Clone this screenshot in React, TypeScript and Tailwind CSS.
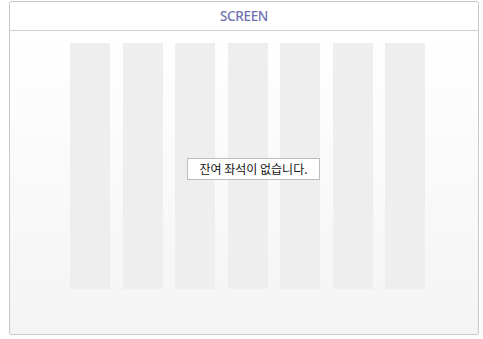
const columns = [0, 1, 2, 3, 4, 5, 6];

export default function App() {
  return (
    <div className="w-[483px] h-[339px] bg-white pl-[9px] pt-[1px]" style={{ fontFamily: '"Noto Sans", "Noto Sans CJK KR", sans-serif' }}>
      <div className="w-[470px] h-[334px] border border-[#c9c9c9] rounded-[2px] flex flex-col bg-white">
        <div className="h-[29px] border-b border-[#cfcfcf] flex items-center justify-center shrink-0">
          <span className="text-[13.5px] font-medium text-[#6e72b0] tracking-tight">SCREEN</span>
        </div>
        <div className="relative flex-1 bg-gradient-to-b from-white to-[#f4f4f4] pl-[60px] pt-[12px]">
          <div className="flex gap-[12.5px]">
            {columns.map((c) => (
              <div key={c} className="w-[40px] h-[246px] bg-[#eeeeee]" />
            ))}
          </div>
          <div className="absolute left-[177px] top-[127px] w-[133px] h-[22px] bg-white border border-[#bdbdbd] flex items-center justify-center">
            <span className="text-[12px] text-[#111] leading-none" style={{ fontFamily: '"Noto Sans CJK KR", sans-serif' }}>
              잔여 좌석이 없습니다.
            </span>
          </div>
        </div>
      </div>
    </div>
  );
}
